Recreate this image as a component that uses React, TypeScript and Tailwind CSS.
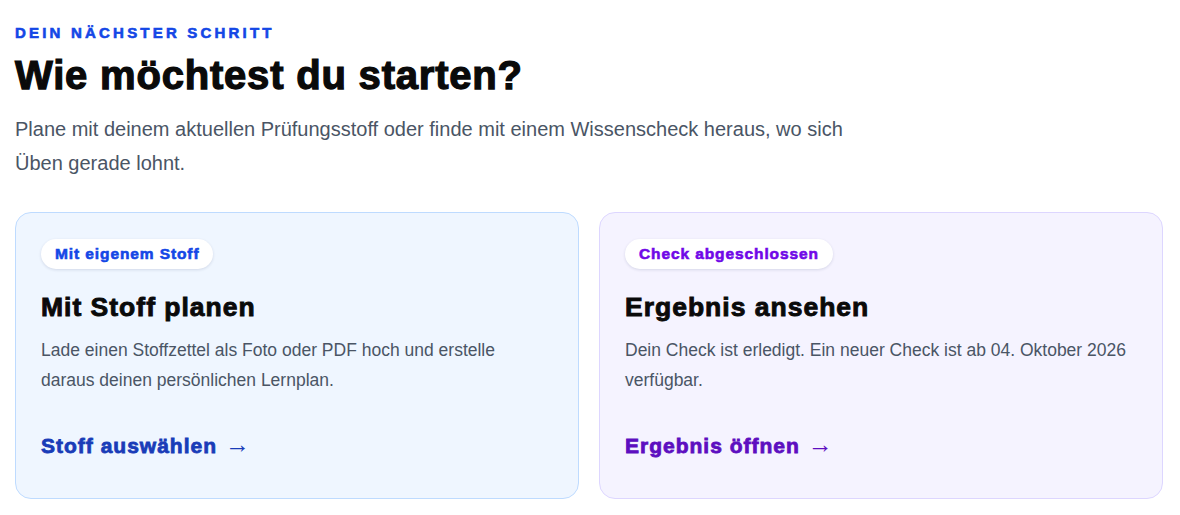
import { ReactNode } from 'react';

interface StartOption {
  badge: string;
  title: string;
  text: string;
  cta: string;
  tone: 'blue' | 'violet';
}

const options: StartOption[] = [
  {
    badge: 'Mit eigenem Stoff',
    title: 'Mit Stoff planen',
    text: 'Lade einen Stoffzettel als Foto oder PDF hoch und erstelle daraus deinen persönlichen Lernplan.',
    cta: 'Stoff auswählen',
    tone: 'blue',
  },
  {
    badge: 'Check abgeschlossen',
    title: 'Ergebnis ansehen',
    text: 'Dein Check ist erledigt. Ein neuer Check ist ab 04. Oktober 2026 verfügbar.',
    cta: 'Ergebnis öffnen',
    tone: 'violet',
  },
];

const tones = {
  blue: {
    card: 'bg-blue-50 border-blue-200',
    badge: 'text-blue-700',
    cta: 'text-blue-800',
  },
  violet: {
    card: 'bg-violet-50 border-violet-200',
    badge: 'text-violet-700',
    cta: 'text-violet-800',
  },
};

function OptionCard({ option }: { option: StartOption }): ReactNode {
  const t = tones[option.tone];
  return (
    <a href="#" className={`flex min-h-[287px] flex-col rounded-2xl border px-[25px] pt-[26px] pb-[38px] ${t.card}`}>
      <span
        className={`self-start rounded-full bg-white px-[14px] py-[6px] text-[15.5px] font-bold leading-[18px] tracking-[0.9px] shadow-[0_1px_3px_rgba(30,41,90,0.14)] [-webkit-text-stroke:0.6px_currentColor] ${t.badge}`}
      >
        {option.badge}
      </span>
      <h2 className="mt-[22px] text-[26.5px] font-bold leading-[32px] tracking-[1px] text-neutral-950 [-webkit-text-stroke:0.9px_currentColor]">
        {option.title}
      </h2>
      <p className="mt-[12px] text-[17.5px] leading-[30px] text-gray-600">{option.text}</p>
      <span className={`mt-auto pt-[34px] text-[21px] font-bold leading-[28px] ${t.cta}`}>
        <span className="tracking-[1px] [-webkit-text-stroke:0.8px_currentColor]">{option.cta}</span>{' '}
        <span className="ml-[2px] text-[25px] leading-[20px] font-normal">→</span>
      </span>
    </a>
  );
}

export default function App() {
  return (
    <div className="min-h-[515px] bg-white px-[15px] pt-[24px] font-['Liberation_Sans',Arial,sans-serif]">
      <p className="text-[15px] font-bold uppercase leading-[18px] tracking-[3.2px] text-blue-700 [-webkit-text-stroke:0.6px_currentColor]">
        Dein nächster Schritt
      </p>
      <h1 className="mt-[10px] text-[40px] font-bold leading-[46px] tracking-[0.8px] text-neutral-950 [-webkit-text-stroke:1.25px_currentColor]">
        Wie möchtest du starten?
      </h1>
      <p className="mt-[14px] max-w-[860px] text-[20px] leading-[34px] text-gray-600">
        Plane mit deinem aktuellen Prüfungsstoff oder finde mit einem Wissenscheck heraus, wo sich Üben gerade lohnt.
      </p>
      <div className="mt-[32px] grid grid-cols-2 gap-[20px] pr-[2px]">
        {options.map((o) => (
          <OptionCard key={o.title} option={o} />
        ))}
      </div>
    </div>
  );
}
